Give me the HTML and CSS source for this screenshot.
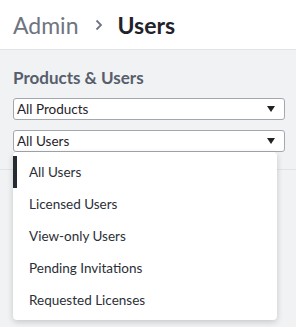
FILE: index.html
```html
<!DOCTYPE html>
<html>
<head>
<meta name="viewport" content="width=device-width, initial-scale=1.0">
  <title>Admin - Users</title>
  <link rel="stylesheet" href="styles.css">
</head>
<body>
  <div class="header">
    <span class="crumb">Admin</span>
    <svg class="sep" width="8" height="12" viewBox="0 0 8 12">
      <polyline points="1.5,1.5 6,6 1.5,10.5" fill="none" stroke="#6e7480" stroke-width="1.8"/>
    </svg>
    <span class="current">Users</span>
  </div>
  <div class="filters">
    <div class="title">Products &amp; Users</div>
    <div class="select first">
      <span>All Products</span>
      <span class="arrow"></span>
    </div>
    <div class="select open">
      <span>All Users</span>
      <span class="arrow"></span>
      <!-- menu abierto -->
      <ul class="menu">
        <li class="active">All Users</li>
        <li>Licensed Users</li>
        <li>View-only Users</li>
        <li>Pending Invitations</li>
        <li>Requested Licenses</li>
      </ul>
    </div>
  </div>
</body>
</html>
```
FILE: styles.css
```css
html, body {
  min-height: 100%;
  height: 100%;
}
body {
  margin: 0;
  background: #f1f2f4;
  font-family: Lato, "Noto Sans", sans-serif;
  color: #2b2f36;
}
.header {
  height: 49px;
  background: #fff;
  border-bottom: 1px solid #e1e3e6;
  display: flex;
  align-items: center;
  padding-left: 13px;
  font-size: 23px;
}
.crumb {
  color: #6e7480;
}
.sep {
  margin: 1px 14px 0 17px;
}
.current {
  font-weight: bold;
  color: #1f232a;
}
.filters {
  padding: 17px 11px 17px 13px;
  border-bottom: 1px solid #e1e3e6;
}
.title {
  font-size: 17px;
  line-height: 22px;
  font-weight: bold;
  color: #575e6b;
  margin-bottom: 9px;
}
.select {
  position: relative;
  height: 20px;
  background: #fff;
  border: 1px solid #a4a8ae;
  border-radius: 3px;
  display: flex;
  align-items: center;
  justify-content: space-between;
  padding: 0 9px 0 3px;
  font-size: 13.5px;
  color: #1f232a;
}
.select.first {
  margin-bottom: 10px;
}
.arrow {
  width: 0;
  height: 0;
  border-left: 4px solid transparent;
  border-right: 4px solid transparent;
  border-top: 6px solid #222;
}
.menu {
  position: absolute;
  top: 100%;
  left: -1px;
  width: 264px;
  margin: 1px 0 0 0;
  padding: 4px 0;
  list-style: none;
  background: #fff;
  border-radius: 4px;
  box-shadow: 0 2px 6px rgba(0, 0, 0, 0.18);
  z-index: 2;
}
.menu li {
  height: 32px;
  line-height: 32px;
  padding-left: 16px;
  font-size: 13.5px;
  color: #2b2f36;
}
.menu li.active {
  box-shadow: inset 4px 0 0 #262a31;
}
```
